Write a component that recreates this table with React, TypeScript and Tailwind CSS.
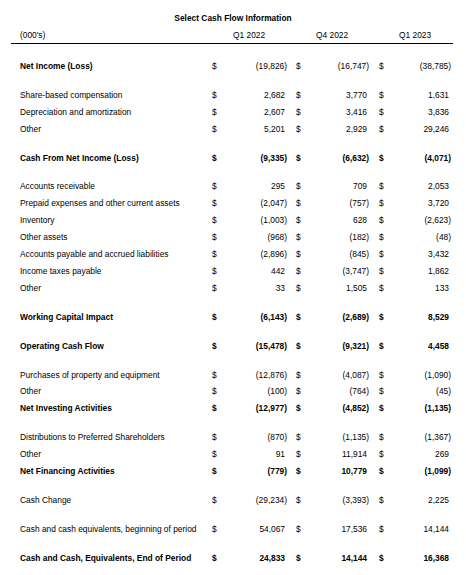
import React from "react";

type Row =
  | { gap: true }
  | { gap?: false; label: string; boldLabel?: boolean; bold?: boolean; v: [string, string, string] };

const G: Row = { gap: true };

const rows: Row[] = [
  { label: "Net Income (Loss)", boldLabel: true, v: ["(19,826)", "(16,747)", "(38,785)"] },
  G,
  { label: "Share-based compensation", v: ["2,682", "3,770", "1,631"] },
  { label: "Depreciation and amortization", v: ["2,607", "3,416", "3,836"] },
  { label: "Other", v: ["5,201", "2,929", "29,246"] },
  G,
  { label: "Cash From Net Income (Loss)", bold: true, v: ["(9,335)", "(6,632)", "(4,071)"] },
  G,
  { label: "Accounts receivable", v: ["295", "709", "2,053"] },
  { label: "Prepaid expenses and other current assets", v: ["(2,047)", "(757)", "3,720"] },
  { label: "Inventory", v: ["(1,003)", "628", "(2,623)"] },
  { label: "Other assets", v: ["(968)", "(182)", "(48)"] },
  { label: "Accounts payable and accrued liabilities", v: ["(2,896)", "(845)", "3,432"] },
  { label: "Income taxes payable", v: ["442", "(3,747)", "1,862"] },
  { label: "Other", v: ["33", "1,505", "133"] },
  G,
  { label: "Working Capital Impact", bold: true, v: ["(6,143)", "(2,689)", "8,529"] },
  G,
  { label: "Operating Cash Flow", bold: true, v: ["(15,478)", "(9,321)", "4,458"] },
  G,
  { label: "Purchases of property and equipment", v: ["(12,876)", "(4,087)", "(1,090)"] },
  { label: "Other", v: ["(100)", "(764)", "(45)"] },
  { label: "Net Investing Activities", bold: true, v: ["(12,977)", "(4,852)", "(1,135)"] },
  G,
  { label: "Distributions to Preferred Shareholders", v: ["(870)", "(1,135)", "(1,367)"] },
  { label: "Other", v: ["91", "11,914", "269"] },
  { label: "Net Financing Activities", bold: true, v: ["(779)", "10,779", "(1,099)"] },
  G,
  { label: "Cash Change", v: ["(29,234)", "(3,393)", "2,225"] },
  G,
  { label: "Cash and cash equivalents, beginning of period", v: ["54,067", "17,536", "14,144"] },
  G,
  { label: "Cash and Cash, Equivalents, End of Period", bold: true, v: ["24,833", "14,144", "16,368"] },
];

function Val({ s }: { s: string }) {
  const neg = s.startsWith("(");
  return <span className={neg ? "" : "pr-[2px]"}>{s}</span>;
}

export default function App() {
  return (
    <div
      className="w-[466px] h-[575px] bg-white text-black text-[8.4px] leading-[12px]"
      style={{ fontFamily: '"Liberation Sans", Arial, sans-serif' }}
    >
      <div className="ml-[11px] w-[442px] pt-[12px]">
        <div className="text-center font-bold h-[12px] pl-[2px]">Select Cash Flow Information</div>
        <div className="grid grid-cols-[201px_10px_65px_19px_63px_20px_62px] mt-[5px] h-[15px] border-b border-black">
          <div className="pl-[9px]">(000's)</div>
          <div />
          <div className="pl-[11px]">Q1 2022</div>
          <div className="col-span-2 pl-[29px]">Q4 2022</div>
          <div className="col-span-2 pl-[30px]">Q1 2023</div>
        </div>
        <div className="mt-[13.6px]">
          {rows.map((r, i) =>
            r.gap ? (
              <div key={i} className="h-[12px]" />
            ) : (
              <div
                key={i}
                className={`grid grid-cols-[201px_10px_65px_19px_63px_20px_62px] h-[16.9px] items-center ${
                  r.bold ? "font-bold" : ""
                }`}
              >
                <div className={`pl-[9px] whitespace-nowrap ${r.boldLabel ? "font-bold" : ""}`}>{r.label}</div>
                <div>$</div>
                <div className="text-right">
                  <Val s={r.v[0]} />
                </div>
                <div className="pl-[9px]">$</div>
                <div className="text-right">
                  <Val s={r.v[1]} />
                </div>
                <div className="pl-[10px]">$</div>
                <div className="text-right">
                  <Val s={r.v[2]} />
                </div>
              </div>
            )
          )}
        </div>
      </div>
    </div>
  );
}
